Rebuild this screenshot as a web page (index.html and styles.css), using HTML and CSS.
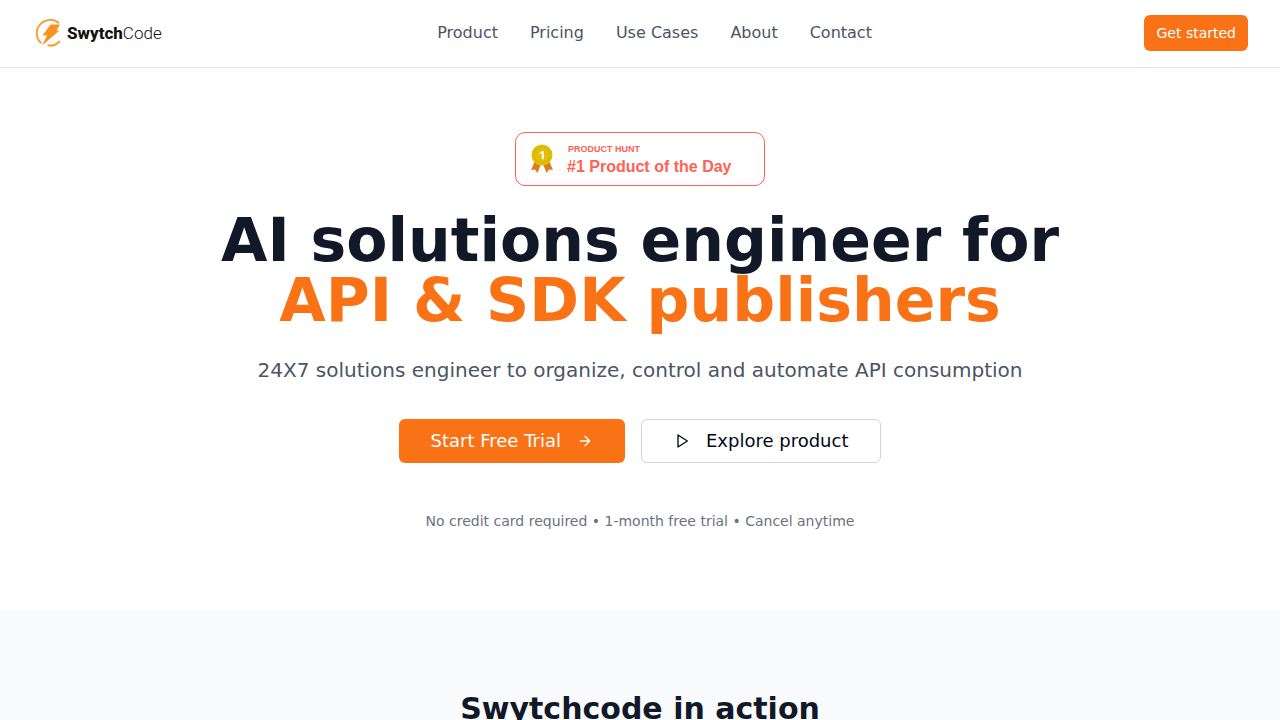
FILE: index.html
```html
<!DOCTYPE html>
<html lang="en">

<head>
    <meta charset="UTF-8">
    <title>SwytchCode</title>
    <meta name="viewport" content="width=device-width, initial-scale=1">
    <link rel="stylesheet" href="styles.css">
</head>

<body>
    <header class="header">
        <a class="logo" href="#">
            <svg class="logo-icon" width="28" height="30" viewBox="0 0 28 30" aria-hidden="true">
                <path d="M24 5.200A12.600 12.600 0 1 0 6.300 25.300M12.500 27.300A12.600 12.600 0 0 0 24.800 23" fill="none" stroke="#f7a23c" stroke-width="2"/>
                <path d="M15.500 6.500h9.500l-3.500 6h3L7 27.500l5-10H7.500z" fill="#f7941d"/>
            </svg>
            <span class="logo-text"><b>Swytch</b>Code</span>
        </a>
        <nav class="nav">
            <a href="#">Product</a>
            <a href="#">Pricing</a>
            <a href="#">Use Cases</a>
            <a href="#">About</a>
            <a href="#">Contact</a>
        </nav>
        <button class="btn btn-small">Get started</button>
    </header>

    <main>
        <section class="hero">
            <a class="badge" href="#">
                <svg width="22" height="30" viewBox="0 0 22 30" aria-hidden="true">
                    <path d="M4 17L0 26l4-.500L6.500 29 10 20zM18 17l4 9-4-.500L15.500 29 12 20z" fill="#df7b20"/>
                    <circle cx="11" cy="11" r="10.500" fill="#e2c000"/>
                    <circle cx="11" cy="11" r="8" fill="#e0bd10" stroke="#d4b600"/>
                    <path d="M8.500 8.800l2.800-1.900h1.700v8.300h-2.300V9.300l-2.200.900z" fill="#fff4c4"/>
                </svg>
                <span class="badge-text">
                    <span class="badge-label">PRODUCT HUNT</span>
                    <span class="badge-title">#1 Product of the Day</span>
                </span>
            </a>
            <h1>AI solutions engineer for <span class="accent">API &amp; SDK publishers</span></h1>
            <p class="subtitle">24X7 solutions engineer to organize, control and automate API consumption</p>
            <div class="actions">
                <button class="btn btn-large">
                    Start Free Trial
                    <svg class="icon" viewBox="0 0 24 24" aria-hidden="true"><path d="M5 12h14M12 5l7 7-7 7"/></svg>
                </button>
                <button class="btn btn-large btn-outline">
                    <svg class="icon" viewBox="0 0 24 24" aria-hidden="true"><path d="M6 3l14 9-14 9z"/></svg>
                    Explore product
                </button>
            </div>
            <p class="note">No credit card required • 1-month free trial • Cancel anytime</p>
        </section>

        <section class="demo">
            <h2>Swytchcode in action</h2>
        </section>
    </main>
</body>

</html>
```
FILE: styles.css
```css
* {
    box-sizing: border-box;
}

body {
    margin: 0;
    font-family: "DejaVu Sans", sans-serif;
    font-size: 16px;
    line-height: 24px;
    color: #0f172a;
    background: #fff;
}

h1,
h2,
p {
    margin: 0;
}

a {
    text-decoration: none;
}

.header {
    display: flex;
    align-items: center;
    justify-content: space-between;
    min-height: 68px;
    padding: 15px 32px 16px;
    border-bottom: 1px solid #e2e8f0;
}

.logo {
    display: flex;
    align-items: center;
    gap: 4px;
    padding: 0 3px;
    color: #111;
}

.logo-text {
    font-family: Roboto, sans-serif;
    font-size: 17px;
    font-weight: 300;
}

.logo-text b {
    font-weight: 800;
}

.nav {
    display: flex;
    gap: 32px;
}

.nav a {
    color: #4b5563;
}

.btn {
    display: flex;
    align-items: center;
    justify-content: center;
    border: 0;
    border-radius: 6px;
    font-family: inherit;
    color: #fff;
    background: #f97316;
    cursor: pointer;
}

.btn-small {
    height: 36px;
    padding: 0 12px;
    font-size: 14px;
}

.btn-large {
    gap: 16px;
    height: 44px;
    padding: 0 32px;
    font-size: 18px;
    line-height: 28px;
}

.btn-outline {
    border: 1px solid #d1d5db;
    color: #020817;
    background: #fff;
}

.icon {
    width: 16px;
    height: 16px;
    fill: none;
    stroke: currentColor;
    stroke-width: 2;
    stroke-linecap: round;
    stroke-linejoin: round;
}

.hero {
    display: flex;
    flex-direction: column;
    align-items: center;
    padding: 64px 32px 80px;
    text-align: center;
}

.badge {
    display: flex;
    align-items: center;
    gap: 14px;
    width: 250px;
    height: 54px;
    padding: 0 15px;
    border: 1px solid #ff6154;
    border-radius: 10px;
    font-family: "Liberation Sans", Arial, sans-serif;
    font-weight: 700;
    text-align: left;
    color: #ff6154;
}

.badge-text {
    display: flex;
    flex-direction: column;
}

.badge-label {
    padding-left: 1px;
    font-size: 9px;
    line-height: 16px;
}

.badge-title {
    font-size: 16px;
    line-height: 20px;
}

h1 {
    margin-top: 24px;
    font-size: 60px;
    line-height: 60px;
    color: #111827;
}

.accent {
    display: block;
    color: #f97316;
}

.subtitle {
    margin-top: 26px;
    font-size: 20px;
    line-height: 28px;
    color: #4b5563;
}

.actions {
    display: flex;
    flex-wrap: wrap;
    justify-content: center;
    gap: 16px;
    margin-top: 35px;
}

.note {
    margin-top: 48px;
    font-size: 14px;
    line-height: 20px;
    color: #6b7280;
}

.demo {
    padding: 80px 32px;
    text-align: center;
    background: #f9fafb;
}

h2 {
    font-size: 30px;
    line-height: 36px;
    color: #111827;
}
```
